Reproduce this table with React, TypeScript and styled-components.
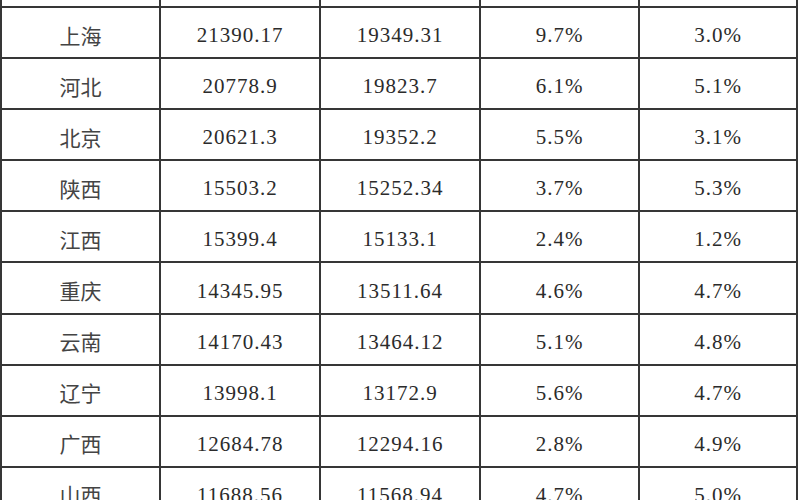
import styled, { createGlobalStyle } from 'styled-components';

const GlobalStyle = createGlobalStyle`
    html, body {
        margin: 0;
        padding: 0;
        background: #ffffff;
    }
`;

const LINE = '#363636';
const COLUMNS = '159px 160px 160px 159px 158px';

const Page = styled.div`
    width: 800px;
    height: 500px;
    overflow: hidden;
    background: #ffffff;
`;

// the table is cropped: only the bottom edge of the header row shows
const StripRow = styled.div`
    display: grid;
    grid-template-columns: ${COLUMNS};
    width: 796px;
    border-left: 2px solid ${LINE};
`;

const Strip = styled.div`
    height: 6px;
    border-right: 2px solid ${LINE};
    border-bottom: 2px solid ${LINE};
`;

const Grid = styled.div`
    display: grid;
    grid-template-columns: ${COLUMNS};
    grid-auto-rows: 51.1px;
    width: 796px;
    border-left: 2px solid ${LINE};
`;

const Cell = styled.div<{ $cjk?: boolean }>`
    display: flex;
    align-items: center;
    justify-content: center;
    box-sizing: border-box;
    padding-top: ${(p) => (p.$cjk ? '4px' : '6px')};
    border-right: 2px solid ${LINE};
    border-bottom: 2px solid ${LINE};
    font-family: 'Liberation Serif', 'Noto Sans CJK SC', serif;
    font-size: 21px;
    letter-spacing: ${(p) => (p.$cjk ? '0' : '1px')};
    color: ${(p) => (p.$cjk ? '#444444' : '#2b2b2b')};
    white-space: nowrap;
`;

const rows: string[][] = [
    ['上海', '21390.17', '19349.31', '9.7%', '3.0%'],
    ['河北', '20778.9', '19823.7', '6.1%', '5.1%'],
    ['北京', '20621.3', '19352.2', '5.5%', '3.1%'],
    ['陕西', '15503.2', '15252.34', '3.7%', '5.3%'],
    ['江西', '15399.4', '15133.1', '2.4%', '1.2%'],
    ['重庆', '14345.95', '13511.64', '4.6%', '4.7%'],
    ['云南', '14170.43', '13464.12', '5.1%', '4.8%'],
    ['辽宁', '13998.1', '13172.9', '5.6%', '4.7%'],
    ['广西', '12684.78', '12294.16', '2.8%', '4.9%'],
    ['山西', '11688.56', '11568.94', '4.7%', '5.0%'],
];

export default function App() {
    return (
        <Page>
            <GlobalStyle />
            <StripRow>
                {[0, 1, 2, 3, 4].map((i) => (
                    <Strip key={i} />
                ))}
            </StripRow>
            <Grid>
                {rows.map((row) =>
                    row.map((value, i) => (
                        <Cell key={row[0] + i} $cjk={i === 0}>
                            {value}
                        </Cell>
                    ))
                )}
            </Grid>
        </Page>
    );
}
